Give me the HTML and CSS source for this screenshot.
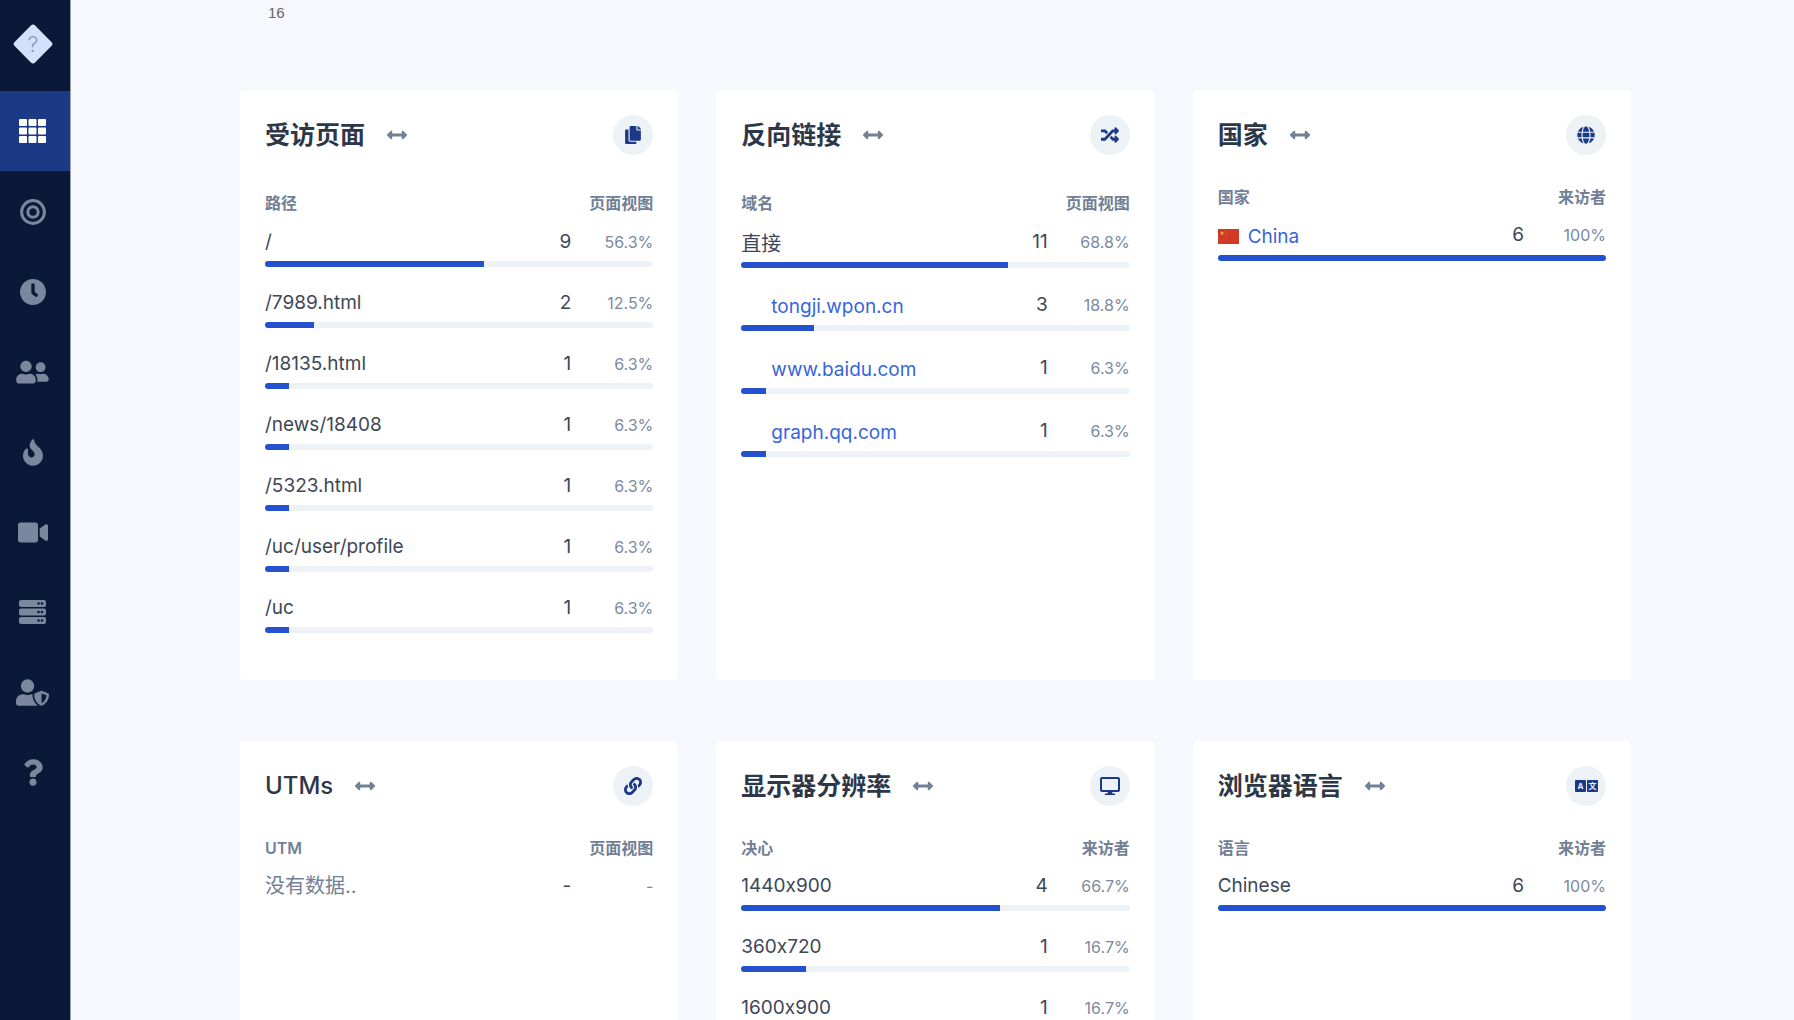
FILE: index.html
```html
<!DOCTYPE html>
<html lang="zh-CN">
<head>
<meta charset="utf-8">
<meta name="viewport" content="width=device-width, initial-scale=1">
<title>统计</title>
<link rel="stylesheet" href="styles.css">
</head>
<body>
<svg class="sprite" aria-hidden="true">
  <symbol id="arrows" viewBox="0 0 512 512"><path d="M377.941 169.941V216H134.059v-46.059c0-21.382-25.851-32.09-40.971-16.971L7.029 239.029c-9.373 9.373-9.373 24.568 0 33.941l86.059 86.059c15.119 15.119 40.971 4.411 40.971-16.971V296h243.882v46.059c0 21.382 25.851 32.09 40.971 16.971l86.059-86.059c9.373-9.373 9.373-24.568 0-33.941l-86.059-86.059c-15.119-15.12-40.971-4.412-40.971 16.97z"/></symbol>
</svg>
<div class="app">
  <nav class="sidebar">
    <a class="logo" href="#" aria-label="Logo">
      <svg width="40" height="40" viewBox="0 0 40 40"><rect x="5.500" y="5.500" width="29" height="29" rx="3" transform="rotate(45 20 20)"/><text x="20" y="28" text-anchor="middle">?</text></svg>
    </a>
    <a class="nav-item active" href="#" aria-label="Dashboard">
      <svg width="27" height="24" viewBox="0 0 27 24"><rect width="8" height="7" rx="1"/><rect x="9.500" width="8" height="7" rx="1"/><rect x="19" width="8" height="7" rx="1"/><rect y="8.500" width="8" height="7" rx="1"/><rect x="9.500" y="8.500" width="8" height="7" rx="1"/><rect x="19" y="8.500" width="8" height="7" rx="1"/><rect y="17" width="8" height="7" rx="1"/><rect x="9.500" y="17" width="8" height="7" rx="1"/><rect x="19" y="17" width="8" height="7" rx="1"/></svg>
    </a>
    <a class="nav-item" href="#" aria-label="Goals">
      <svg width="26" height="26" viewBox="0 0 26 26"><circle class="ring" cx="13" cy="13" r="11.400"/><circle class="ring" cx="13" cy="13" r="5.200"/></svg>
    </a>
    <a class="nav-item" href="#" aria-label="History">
      <svg width="26" height="26" viewBox="8 8 496 496"><path d="M256,8C119,8,8,119,8,256S119,504,256,504,504,393,504,256,393,8,256,8Zm92.490,313h0l-20,25a16,16,0,0,1-22.490,2.500h0l-67-49.720a40,40,0,0,1-15-31.230V112a16,16,0,0,1,16-16h32a16,16,0,0,1,16,16V256l58,42.500A16,16,0,0,1,348.490,321Z"/></svg>
    </a>
    <a class="nav-item" href="#" aria-label="Visitors">
      <svg width="33" height="26" viewBox="0 0 640 512"><path d="M192 256c61.900 0 112-50.100 112-112S253.900 32 192 32 80 82.100 80 144s50.100 112 112 112zm76.800 32h-8.300c-20.800 10-43.900 16-68.500 16s-47.600-6-68.500-16h-8.300C51.600 288 0 339.600 0 403.200V432c0 26.500 21.500 48 48 48h288c26.500 0 48-21.500 48-48v-28.800c0-63.600-51.600-115.200-115.200-115.200zM480 256c53 0 96-43 96-96s-43-96-96-96-96 43-96 96 43 96 96 96zm48 32h-3.800c-13.900 4.800-28.600 8-44.200 8s-30.300-3.200-44.200-8H432c-20.400 0-39.200 5.900-55.700 15.400 24.400 26.300 39.700 61.200 39.700 99.800v38.400c0 2.200-.5 4.300-.6 6.400H592c26.500 0 48-21.500 48-48 0-61.900-50.100-112-112-112z"/></svg>
    </a>
    <a class="nav-item" href="#" aria-label="Heatmaps">
      <svg width="20" height="27" viewBox="0 0 384 512"><path d="M216 23.860c0-23.800-30.650-32.770-44.150-13.040C48 191.850 224 200 224 288c0 35.630-29.110 64.460-64.850 63.990-35.170-.45-63.150-29.770-63.150-64.940v-85.510c0-21.700-26.470-32.230-41.430-16.500C27.800 213.160 0 261.330 0 320c0 105.870 86.130 192 192 192s192-86.130 192-192c0-170.290-168-193-168-296.140z"/></svg>
    </a>
    <a class="nav-item" href="#" aria-label="Recordings">
      <svg width="30" height="27" viewBox="0 0 576 512"><path d="M336.200 64H47.800C21.400 64 0 85.400 0 111.800v288.400C0 426.600 21.400 448 47.800 448h288.400c26.400 0 47.800-21.400 47.800-47.800V111.800c0-26.400-21.400-47.800-47.800-47.800zm189.400 37.700L416 177.300v157.400l109.600 75.500c21.200 14.600 50.400-.3 50.400-25.800V127.500c0-25.400-29.100-40.400-50.400-25.800z"/></svg>
    </a>
    <a class="nav-item" href="#" aria-label="Servers">
      <svg width="27" height="24" viewBox="0 0 27 24"><rect width="27" height="7" rx="2"/><rect y="8.500" width="27" height="7" rx="2"/><rect y="17" width="27" height="7" rx="2"/><g class="hole"><circle cx="19.500" cy="3.500" r="1.300"/><circle cx="23" cy="3.500" r="1.300"/><circle cx="19.500" cy="12" r="1.300"/><circle cx="23" cy="12" r="1.300"/><circle cx="19.500" cy="20.500" r="1.300"/><circle cx="23" cy="20.500" r="1.300"/></g></svg>
    </a>
    <a class="nav-item" href="#" aria-label="Admin">
      <svg width="33" height="27" viewBox="0 0 640 512"><path d="M622.300 271.100l-115.200-45c-4.100-1.600-12.600-3.700-22.200 0l-115.200 45c-10.700 4.200-17.700 14-17.700 24.900 0 111.600 68.700 188.800 132.900 213.900 9.600 3.700 18 1.600 22.200 0C558.400 489.900 640 420.500 640 296c0-10.900-7-20.700-17.700-24.900zM496 462.400V273.300l95.500 37.300c-5.600 87.100-60.900 135.400-95.500 151.800zM224 256c70.700 0 128-57.300 128-128S294.700 0 224 0 96 57.300 96 128s57.300 128 128 128zm96 40c0-2.500.8-4.800 1.100-7.200-2.500-.1-4.900-.8-7.500-.8h-16.700c-22.200 10.200-46.900 16-72.900 16s-50.600-5.800-72.900-16h-16.700C60.200 288 0 348.200 0 422.400V464c0 26.500 21.500 48 48 48h352c6.800 0 13.300-1.500 19.200-4-54-42.900-99.200-116.700-99.200-212z"/></svg>
    </a>
    <a class="nav-item" href="#" aria-label="Help">
      <svg width="20" height="27" viewBox="0 0 384 512"><path d="M202.021 0C122.202 0 70.503 32.703 29.914 91.026c-7.363 10.580-5.093 25.086 5.178 32.874l43.138 32.709c10.373 7.865 25.132 6.026 33.253-4.148 25.049-31.381 43.630-49.449 82.757-49.449 30.764 0 68.816 19.799 68.816 49.631 0 22.552-18.617 34.134-48.993 51.164-35.423 19.860-82.299 44.576-82.299 106.405V320c0 13.255 10.745 24 24 24h72.471c13.255 0 24-10.745 24-24v-5.773c0-42.860 125.268-44.645 125.268-160.627C377.504 66.256 286.902 0 202.021 0zM192 373.459c-38.196 0-69.271 31.075-69.271 69.271 0 38.195 31.075 69.270 69.271 69.270s69.271-31.075 69.271-69.271-31.075-69.270-69.271-69.270z"/></svg>
    </a>
  </nav>

  <main class="main">
    <div class="content">
      <div class="chart-axis">16</div>
      <div class="cards">

        <section class="card card-spaced">
          <header class="card-head">
            <h2>受访页面</h2>
            <button class="expand" type="button" aria-label="展开"><svg width="20" height="20"><use href="#arrows"/></svg></button>
            <span class="badge"><svg width="16" height="18" viewBox="0 0 448 512"><path d="M320 448v40c0 13.255-10.745 24-24 24H24c-13.255 0-24-10.745-24-24V120c0-13.255 10.745-24 24-24h72v296c0 30.879 25.121 56 56 56h168zm0-344V0H152c-13.255 0-24 10.745-24 24v368c0 13.255 10.745 24 24 24h272c13.255 0 24-10.745 24-24V128H344c-13.200 0-24-10.800-24-24zm120.971-31.029L375.029 7.029A24 24 0 0 0 358.059 0H352v96h96v-6.059a24 24 0 0 0-7.029-16.970z"/></svg></span>
          </header>
          <table class="stats">
            <thead><tr><th scope="col">路径</th><th scope="col" colspan="2">页面视图</th></tr></thead>
            <tbody>
              <tr><td class="name">/</td><td class="count">9</td><td class="share">56.3%</td></tr>
              <tr><td class="meter" colspan="3"><div class="track"><div class="fill" style="width:56.3%"></div></div></td></tr>
              <tr><td class="name">/7989.html</td><td class="count">2</td><td class="share">12.5%</td></tr>
              <tr><td class="meter" colspan="3"><div class="track"><div class="fill" style="width:12.5%"></div></div></td></tr>
              <tr><td class="name">/18135.html</td><td class="count">1</td><td class="share">6.3%</td></tr>
              <tr><td class="meter" colspan="3"><div class="track"><div class="fill" style="width:6.3%"></div></div></td></tr>
              <tr><td class="name">/news/18408</td><td class="count">1</td><td class="share">6.3%</td></tr>
              <tr><td class="meter" colspan="3"><div class="track"><div class="fill" style="width:6.3%"></div></div></td></tr>
              <tr><td class="name">/5323.html</td><td class="count">1</td><td class="share">6.3%</td></tr>
              <tr><td class="meter" colspan="3"><div class="track"><div class="fill" style="width:6.3%"></div></div></td></tr>
              <tr><td class="name">/uc/user/profile</td><td class="count">1</td><td class="share">6.3%</td></tr>
              <tr><td class="meter" colspan="3"><div class="track"><div class="fill" style="width:6.3%"></div></div></td></tr>
              <tr><td class="name">/uc</td><td class="count">1</td><td class="share">6.3%</td></tr>
              <tr><td class="meter" colspan="3"><div class="track"><div class="fill" style="width:6.3%"></div></div></td></tr>
            </tbody>
          </table>
        </section>

        <section class="card card-spaced card-links">
          <header class="card-head">
            <h2>反向链接</h2>
            <button class="expand" type="button" aria-label="展开"><svg width="20" height="20"><use href="#arrows"/></svg></button>
            <span class="badge"><svg width="18" height="18" viewBox="0 0 512 512"><path d="M504.971 359.029c9.373 9.373 9.373 24.569 0 33.941l-80 79.984c-15.010 15.010-40.971 4.490-40.971-16.971V416h-58.785a12.004 12.004 0 0 1-8.773-3.812l-70.556-75.596 53.333-57.143L352 336h32v-39.981c0-21.438 25.943-31.998 40.971-16.971l80 79.981zM12 176h84l52.781 56.551 53.333-57.143-70.556-75.596A11.999 11.999 0 0 0 122.785 96H12c-6.627 0-12 5.373-12 12v56c0 6.627 5.373 12 12 12zm372 0v39.984c0 21.460 25.961 31.980 40.971 16.971l80-79.984c9.373-9.373 9.373-24.569 0-33.941l-80-79.981C409.943 24.021 384 34.582 384 56.019V96h-58.785a12.004 12.004 0 0 0-8.773 3.812L96 336H12c-6.627 0-12 5.373-12 12v56c0 6.627 5.373 12 12 12h110.785c3.326 0 6.503-1.381 8.773-3.812L352 176h32z"/></svg></span>
          </header>
          <table class="stats">
            <thead><tr><th scope="col">域名</th><th scope="col" colspan="2">页面视图</th></tr></thead>
            <tbody>
              <tr><td class="name han">直接</td><td class="count">11</td><td class="share">68.8%</td></tr>
              <tr><td class="meter" colspan="3"><div class="track"><div class="fill" style="width:68.8%"></div></div></td></tr>
              <tr><td class="name"><a class="site" href="#">tongji.wpon.cn</a></td><td class="count">3</td><td class="share">18.8%</td></tr>
              <tr><td class="meter" colspan="3"><div class="track"><div class="fill" style="width:18.8%"></div></div></td></tr>
              <tr><td class="name"><a class="site" href="#">www.baidu.com</a></td><td class="count">1</td><td class="share">6.3%</td></tr>
              <tr><td class="meter" colspan="3"><div class="track"><div class="fill" style="width:6.3%"></div></div></td></tr>
              <tr><td class="name"><a class="site" href="#">graph.qq.com</a></td><td class="count">1</td><td class="share">6.3%</td></tr>
              <tr><td class="meter" colspan="3"><div class="track"><div class="fill" style="width:6.3%"></div></div></td></tr>
            </tbody>
          </table>
        </section>

        <section class="card card-links">
          <header class="card-head">
            <h2>国家</h2>
            <button class="expand" type="button" aria-label="展开"><svg width="20" height="20"><use href="#arrows"/></svg></button>
            <span class="badge"><svg width="18" height="18" viewBox="0 0 496 512"><path d="M336.500 160C322 70.700 287.800 8 248 8s-74 62.700-88.500 152h177zM152 256c0 22.200 1.200 43.500 3.300 64h185.300c2.100-20.500 3.300-41.800 3.300-64s-1.200-43.500-3.300-64H155.300c-2.100 20.500-3.300 41.800-3.300 64zm324.700-96c-28.600-67.900-86.500-120.400-158-141.600 24.400 33.800 41.200 84.700 50 141.600h108zM177.200 18.400C105.800 39.600 47.800 92.100 19.300 160h108c8.700-56.900 25.500-107.800 49.900-141.600zM487.400 192H372.700c2.100 21 3.300 42.500 3.300 64s-1.200 43-3.300 64h114.600c5.500-20.500 8.600-41.800 8.600-64s-3.100-43.500-8.500-64zM120 256c0-21.500 1.200-43 3.300-64H8.600C3.200 212.500 0 233.800 0 256s3.200 43.500 8.600 64h114.600c-2-21-3.200-42.500-3.200-64zm39.500 96c14.500 89.300 48.700 152 88.500 152s74-62.700 88.500-152h-177zm159.300 141.600c71.400-21.200 129.400-73.700 158-141.600h-108c-8.800 56.900-25.600 107.800-50 141.600zM19.300 352c28.600 67.900 86.500 120.400 158 141.600-24.400-33.800-41.200-84.700-50-141.600h-108z"/></svg></span>
          </header>
          <table class="stats">
            <thead><tr><th scope="col">国家</th><th scope="col" colspan="2">来访者</th></tr></thead>
            <tbody>
              <tr><td class="name"><svg class="flag" width="21" height="15" viewBox="0 0 21 15"><rect width="21" height="15" fill="#d03a27"/><path fill="#f6c636" d="M4 2l.6 1.500h1.500l-1.200 1 .5 1.500L4 5.100 2.600 6l.5-1.500-1.200-1h1.500z"/><g fill="#e08a2c"><circle cx="7.500" cy="1.700" r=".5"/><circle cx="9" cy="3.200" r=".5"/><circle cx="9" cy="5.200" r=".5"/><circle cx="7.500" cy="6.700" r=".5"/></g></svg><a href="#">China</a></td><td class="count">6</td><td class="share">100%</td></tr>
              <tr><td class="meter" colspan="3"><div class="track"><div class="fill" style="width:100%"></div></div></td></tr>
            </tbody>
          </table>
        </section>

        <section class="card">
          <header class="card-head">
            <h2 class="latin">UTMs</h2>
            <button class="expand" type="button" aria-label="展开"><svg width="20" height="20"><use href="#arrows"/></svg></button>
            <span class="badge"><svg width="18" height="18" viewBox="0 0 512 512"><path d="M326.612 185.391c59.747 59.809 58.927 155.698.36 214.590-.11.120-.24.250-.36.370l-67.200 67.200c-59.270 59.270-155.699 59.262-214.960 0-59.270-59.260-59.270-155.700 0-214.960l37.106-37.106c9.840-9.840 26.786-3.300 27.294 10.606.648 17.722 3.826 35.527 9.690 52.721 1.986 5.822.567 12.262-3.783 16.612l-13.087 13.087c-28.026 28.026-28.905 73.660-1.155 101.960 28.024 28.579 74.086 28.749 102.325.51l67.200-67.190c28.191-28.191 28.073-73.757 0-101.830-3.701-3.694-7.429-6.564-10.341-8.569a16.037 16.037 0 0 1-6.947-12.606c-.396-10.567 3.348-21.456 11.698-29.806l21.054-21.055c5.521-5.521 14.182-6.199 20.584-1.731a152.482 152.482 0 0 1 20.522 17.197zM467.547 44.449c-59.261-59.262-155.690-59.270-214.960 0l-67.200 67.200c-.12.120-.25.250-.36.370-58.566 58.892-59.387 154.781.36 214.590a152.454 152.454 0 0 0 20.521 17.196c6.402 4.468 15.064 3.789 20.584-1.731l21.054-21.055c8.350-8.350 12.094-19.239 11.698-29.806a16.037 16.037 0 0 0-6.947-12.606c-2.912-2.005-6.640-4.875-10.341-8.569-28.073-28.073-28.191-73.639 0-101.830l67.200-67.190c28.239-28.239 74.300-28.069 102.325.51 27.750 28.300 26.872 73.934-1.155 101.960l-13.087 13.087c-4.350 4.350-5.769 10.790-3.783 16.612 5.864 17.194 9.042 34.999 9.690 52.721.509 13.906 17.454 20.446 27.294 10.606l37.106-37.106c59.271-59.259 59.271-155.699.001-214.959z"/></svg></span>
          </header>
          <table class="stats">
            <thead><tr><th scope="col">UTM</th><th scope="col" colspan="2">页面视图</th></tr></thead>
            <tbody>
              <tr><td class="name han empty">没有数据..</td><td class="count">-</td><td class="share">-</td></tr>
            </tbody>
          </table>
        </section>

        <section class="card">
          <header class="card-head">
            <h2>显示器分辨率</h2>
            <button class="expand" type="button" aria-label="展开"><svg width="20" height="20"><use href="#arrows"/></svg></button>
            <span class="badge"><svg width="20" height="18" viewBox="0 0 20 18"><path fill-rule="evenodd" d="M2 0h16a2 2 0 0 1 2 2v11a2 2 0 0 1-2 2h-6l.5 1.500h2a.75.750 0 0 1 0 1.500h-9a.75.750 0 0 1 0-1.500h2L8 15H2a2 2 0 0 1-2-2V2a2 2 0 0 1 2-2zm0 2v11h16V2z"/></svg></span>
          </header>
          <table class="stats">
            <thead><tr><th scope="col">决心</th><th scope="col" colspan="2">来访者</th></tr></thead>
            <tbody>
              <tr><td class="name">1440x900</td><td class="count">4</td><td class="share">66.7%</td></tr>
              <tr><td class="meter" colspan="3"><div class="track"><div class="fill" style="width:66.7%"></div></div></td></tr>
              <tr><td class="name">360x720</td><td class="count">1</td><td class="share">16.7%</td></tr>
              <tr><td class="meter" colspan="3"><div class="track"><div class="fill" style="width:16.7%"></div></div></td></tr>
              <tr><td class="name">1600x900</td><td class="count">1</td><td class="share">16.7%</td></tr>
              <tr><td class="meter" colspan="3"><div class="track"><div class="fill" style="width:16.7%"></div></div></td></tr>
            </tbody>
          </table>
        </section>

        <section class="card">
          <header class="card-head">
            <h2>浏览器语言</h2>
            <button class="expand" type="button" aria-label="展开"><svg width="20" height="20"><use href="#arrows"/></svg></button>
            <span class="badge"><svg class="lang" width="23" height="12" viewBox="0 0 23 12"><rect width="11" height="12" rx="1"/><rect x="12" width="11" height="12" rx="1"/><text x="5.500" y="9" text-anchor="middle">A</text><text x="17.500" y="9" text-anchor="middle">文</text></svg></span>
          </header>
          <table class="stats">
            <thead><tr><th scope="col">语言</th><th scope="col" colspan="2">来访者</th></tr></thead>
            <tbody>
              <tr><td class="name">Chinese</td><td class="count">6</td><td class="share">100%</td></tr>
              <tr><td class="meter" colspan="3"><div class="track"><div class="fill" style="width:100%"></div></div></td></tr>
            </tbody>
          </table>
        </section>

      </div>
    </div>
  </main>
</div>
</body>
</html>
```
FILE: styles.css
```css
* { box-sizing: border-box; }

body {
  margin: 0;
  background: #f6f8fe;
  color: #3d4757;
  font-family: Inter, "Noto Sans CJK SC", sans-serif;
  font-size: 19px;
  font-variant-ligatures: no-contextual;
}

a { color: #3765dc; text-decoration: none; }
svg { display: block; fill: currentColor; }
.sprite { display: none; }

.app { display: flex; height: 100vh; }

/* Sidebar */
.sidebar {
  flex: none;
  width: 71px;
  overflow: hidden;
  background: #0a1938;
  border-right: 1px solid #9aa2b6;
}
.logo,
.nav-item {
  display: flex;
  align-items: center;
  justify-content: center;
  padding-right: 5px;
}
.logo { height: 91px; padding-bottom: 3px; color: #d3e1fb; }
.logo text { fill: #8c9bb5; font-size: 22px; font-weight: 300; }
.nav-item { height: 80px; color: #7b879c; }
.nav-item.active { margin-bottom: 1px; background: #1c3986; color: #fff; }
.ring { fill: none; stroke: currentColor; stroke-width: 3; }
.hole { fill: #0a1938; }

/* Content */
.main { flex: 1; overflow-y: auto; scrollbar-width: none; }
.content { max-width: 1397px; margin: 0 auto; padding-left: 6px; }
.chart-axis {
  height: 90px;
  padding: 3px 0 0 28px;
  color: #666;
  font: 15px/20px "Liberation Sans", sans-serif;
}
.cards {
  display: grid;
  grid-template-columns: repeat(3, minmax(0, 1fr));
  gap: 61px 38px;
}
.card {
  min-height: 590px;
  padding: 25px;
  background: #fff;
  border-radius: 5px;
}
.card-head { display: flex; align-items: center; height: 40px; }
h2 { margin: 0; color: #2d3748; font-size: 25px; font-weight: 600; line-height: 40px; }
h2.latin { font-size: 24px; font-weight: 500; }
.expand {
  margin-left: 22px;
  padding: 0;
  border: 0;
  background: none;
  color: #718096;
}
.badge {
  display: flex;
  align-items: center;
  justify-content: center;
  width: 40px;
  height: 40px;
  margin-left: auto;
  border-radius: 50%;
  background: #edf2f7;
  color: #1c3986;
}
.lang text { fill: #edf2f7; font-size: 8px; font-weight: 700; }

/* Statistic tables */
.stats {
  width: 100%;
  margin-top: 23px;
  border-collapse: collapse;
}
th, td { padding: 0; text-align: right; vertical-align: top; white-space: nowrap; }
th {
  color: #718096;
  font-size: 16px;
  font-weight: 600;
  line-height: 38px;
}
th:first-child, .name { text-align: left; }
td { line-height: 38px; }
.share { width: 82px; color: #7d899e; font-size: 16px; }
.han { font-size: 20px; }
.empty { color: #718096; }
.meter { padding-bottom: 17px; line-height: 0; }
.track { height: 6px; overflow: hidden; border-radius: 3px; background: #edf2f7; }
.fill { height: 6px; background: #2452ce; }

.card-spaced .stats { margin-top: 28px; }
.card-spaced th { line-height: 40px; }
.card-links .name { padding-top: 3px; line-height: 36px; }
.card-links .meter { padding-bottom: 18px; }
.site { margin-left: 30px; }
.flag { display: inline-block; margin-right: 9px; vertical-align: -1px; }
```
